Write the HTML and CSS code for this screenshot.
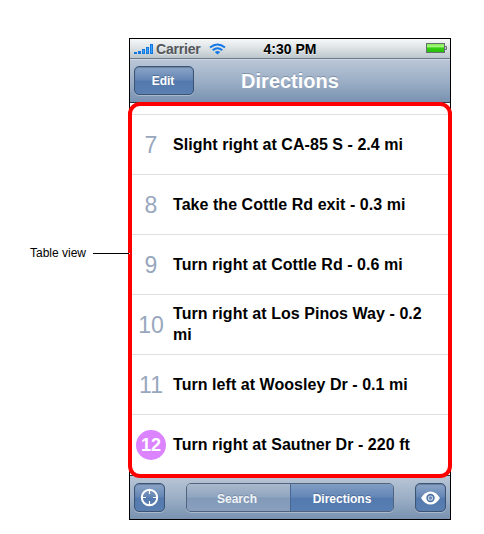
FILE: index.html
```html
<!DOCTYPE html>
<html lang="en">
<head>
<meta charset="utf-8">
<title>Directions</title>
<link rel="stylesheet" href="styles.css">
</head>
<body>
<main class="figure">
  <div class="callout"><span class="callout-text">Table view</span><span class="callout-line"></span></div>
  <section class="phone">
    <header class="status">
      <div class="carrier">
        <svg class="signal" width="20" height="12" viewBox="0 0 20 12"><path d="M0 9h3v2H0zM4 8h3v3H4zM8 6h3v5H8zM12 4h3v7h-3zM16 1h3v10h-3z" fill="#1478df"/><path d="M9 7h1v3H9zM13 5h1v5h-1zM17 2h1v8h-1z" fill="#35a5ff"/></svg>
        <span class="carrier-name">Carrier</span>
        <svg class="wifi" width="17" height="12" viewBox="0 0 17 12" fill="none" stroke="#1478e6" stroke-width="2"><path d="M1 4.6Q8.5-1.6 16 4.6M3.7 7.3Q8.5 3.2 13.3 7.3"/><path d="M8.5 11.6L5.8 9Q8.5 6.8 11.2 9Z" fill="#1478e6" stroke="none"/></svg>
      </div>
      <span class="time">4:30 PM</span>
      <svg class="battery" width="21" height="11" viewBox="0 0 21 11"><defs><linearGradient id="charge" x2="0" y2="1"><stop stop-color="#7bea4c"/><stop offset=".35" stop-color="#a6f87e"/><stop offset=".5" stop-color="#35cf13"/><stop offset="1" stop-color="#25bd08"/></linearGradient></defs><rect x=".5" y=".5" width="18" height="9" fill="url(#charge)" stroke="#64716b"/><path d="M19 3.5h1.5v3H19" fill="#c4cbd1" stroke="#6c7580"/></svg>
    </header>
    <nav class="navbar">
      <button class="btn edit">Edit</button>
      <h1 class="title">Directions</h1>
    </nav>
    <div class="table">
      <ol class="rows">
        <li class="row"><span class="num">7</span><span class="step">Slight right at CA-85 S - 2.4 mi</span></li>
        <li class="row"><span class="num">8</span><span class="step">Take the Cottle Rd exit - 0.3 mi</span></li>
        <li class="row"><span class="num">9</span><span class="step">Turn right at Cottle Rd - 0.6 mi</span></li>
        <li class="row"><span class="num">10</span><span class="step two-line">Turn right at Los Pinos Way - 0.2 mi</span></li>
        <li class="row"><span class="num">11</span><span class="step">Turn left at Woosley Dr - 0.1 mi</span></li>
        <li class="row"><span class="num current">12</span><span class="step">Turn right at Sautner Dr - 220 ft</span></li>
      </ol>
    </div>
    <footer class="toolbar">
      <button class="btn icon" aria-label="Locate"><svg width="19" height="19" viewBox="0 0 19 19" fill="none" stroke="#fff"><circle cx="9.5" cy="9.5" r="7.7" stroke-width="2"/><path d="M9.5 2v4M9.5 13V17M2 9.5h4M13 9.5H17" stroke-width="1.2"/></svg></button>
      <div class="segments"><button class="segment">Search</button><button class="segment selected">Directions</button></div>
      <button class="btn icon" aria-label="View"><svg width="19" height="14" viewBox="0 0 19 14"><path d="M0 7Q4 .4 9.5 .4T19 7Q15 13.6 9.5 13.6T0 7Z" fill="#fff"/><circle cx="9.5" cy="7" r="3.4" fill="#dbe4ef" stroke="#4d73a7" stroke-width="1.6"/><circle cx="9.5" cy="7" r="1.8" fill="#6c8cb8"/></svg></button>
    </footer>
    <div class="highlight"></div>
  </section>
</main>
</body>
</html>
```
FILE: styles.css
```css
* { box-sizing: border-box; }
body { margin: 0; background: #fff; font-family: "Liberation Sans", Arial, sans-serif; color: #000; }
button { font: inherit; padding: 0; margin: 0; }
.figure { display: flex; align-items: flex-start; width: 484px; height: 534px; padding-top: 38px; }
.callout { display: flex; align-items: center; width: 129px; height: 18px; margin-top: 206px; padding-left: 30px; font-size: 12px; position: relative; z-index: 2; }
.callout-text { flex: none; width: 63px; white-space: nowrap; }
.callout-line { flex: none; width: 37px; height: 1px; background: #000; border-right: 1px solid #fff; }
.phone { position: relative; width: 322px; height: 482px; border: 1px solid #000; background: #000; }
.status { display: grid; grid-template-columns: 1fr auto 1fr; align-items: center; height: 20px; padding: 0 4px; background: linear-gradient(#f6f8f9, #d9dfe1 55%, #bcc6cd); border-bottom: 1px solid #6c7988; font-size: 14px; font-weight: bold; }
.carrier { display: flex; align-items: center; color: #54565a; }
.carrier-name { margin-left: 2px; width: 53px; letter-spacing: -.2px; text-shadow: 0 1px #fff8; }
.signal { display: block; }
.time { text-shadow: 0 1px #fff8; }
.battery { justify-self: end; position: relative; left: 1px; }
.navbar { display: grid; grid-template-columns: 60px 1fr 60px; align-items: center; height: 44px; padding: 0 4px 1px; background: linear-gradient(#bac6d7, #9cafc6 50%, #7992b1); border-bottom: 1px solid #2d3642; border-top: 1px solid #cdd7e3; }
.title { margin: 0; padding-top: 1px; text-align: center; color: #fff; font-size: 20px; line-height: 24px; text-shadow: 0 -1px #62748b88; }
.btn { border: 1px solid #3d5475; border-radius: 5px; color: #fff; background: linear-gradient(#8ca5c7, #6486b5 48%, #5379ae 52%, #5a80b2); box-shadow: inset 0 1px 1px #354c6a66, 0 1px #c1cddc99; font-weight: bold; font-size: 12px; text-shadow: 0 -1px #38547c88; }
.edit { height: 29px; padding-right: 2px; }
.table { height: 372px; padding-top: 11px; background: #fff; }
.rows { margin: 0; padding: 0; list-style: none; border-top: 1px solid #e0e0e0; }
.row { display: flex; align-items: center; height: 60px; border-bottom: 1px solid #e0e0e0; }
.row:last-child { border-bottom-color: transparent; }
.num { width: 30px; height: 30px; margin: 1px 7px 0 6px; flex: none; text-align: center; color: #98a7be; font-size: 23px; line-height: 31px; }
.current { border-radius: 50%; background: #dc84ff; color: #fff; font-size: 18px; font-weight: bold; }
.step { width: 260px; font-size: 16px; line-height: 21px; font-weight: bold; letter-spacing: .05px; }
.two-line { margin-top: -1px; }
.toolbar { display: flex; align-items: center; justify-content: space-between; height: 44px; padding: 0 4px; background: linear-gradient(#b9c6d6, #9cafc6 50%, #7992b1); border-top: 1px solid #2d3642; }
.icon { display: flex; align-items: center; justify-content: center; width: 31px; height: 29px; }
.segments { display: grid; grid-template-columns: 1fr 1fr; width: 208px; height: 29px; border: 1px solid #52647d; border-radius: 5px; overflow: hidden; box-shadow: 0 1px #c1cddc99; }
.segment { border: 0; padding-top: 2px; color: #f1f4f8; background: linear-gradient(#abb9cc, #8fa5c0 48%, #829ab9 52%, #89a0bd); font-size: 12px; font-weight: bold; text-shadow: 0 -1px #66799188; }
.segment:first-child { padding-right: 3px; }
.selected { border-left: 1px solid #486895; color: #fff; background: linear-gradient(#819dc2, #6487b7 48%, #5379ae 52%, #587fb3); text-shadow: 0 -1px #38547c88; }
.highlight { position: absolute; left: -2px; top: 63px; width: 324px; height: 376px; border: 4px solid red; border-radius: 12px; }
```
